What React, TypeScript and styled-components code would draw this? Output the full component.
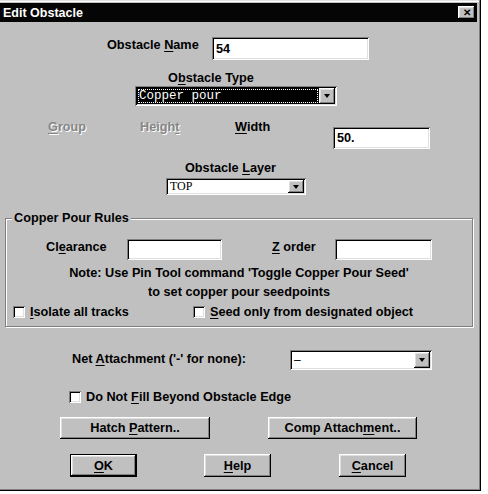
import React from 'react';
import styled, { createGlobalStyle } from 'styled-components';

const GlobalStyle = createGlobalStyle`
  html, body {
    margin: 0;
    padding: 0;
    background: #ffffff;
  }
`;

const EditObstacle: React.FC = () => {
  return (
    <Window>
      <TitleBar>
        <Title>Edit Obstacle</Title>
        <CloseButton>✕</CloseButton>
      </TitleBar>

      <Row $top={15} $left={107}>
        <Label $width={105}>
          Obstacle <Key>N</Key>ame
        </Label>
        <TextField $width={157} $height={23}>54</TextField>
      </Row>

      <Stack $top={10} $left={135}>
        <Label $indent={33}>
          O<Key>b</Key>stacle Type
        </Label>
        <Combo $width={202} $height={20}>
          <ComboValue $selected>Copper pour</ComboValue>
          <DropButton />
        </Combo>
      </Stack>

      <Row $top={13} $left={48}>
        <Label $width={92} $disabled>
          <Key>G</Key>roup
        </Label>
        <Label $width={95} $disabled>
          Heigh<Key>t</Key>
        </Label>
        <Label $width={98}>
          <Key>W</Key>idth
        </Label>
        <TextField $width={97} $height={22} $offset={8}>
          50.
        </TextField>
      </Row>

      <Stack $top={11} $left={166}>
        <Label $indent={19}>
          Obstacle <Key>L</Key>ayer
        </Label>
        <Combo $width={140} $height={17} $offset={2}>
          <ComboValue $serif>TOP</ComboValue>
          <DropButton />
        </Combo>
      </Stack>

      <GroupBox>
        <Legend>Copper Pour Rules</Legend>
        <Row $top={13} $left={40}>
          <Label $width={81}>
            Cl<Key>e</Key>arance
          </Label>
          <TextField $width={95} $height={21} />
          <Label $width={63} $indent={50}>
            <Key>Z</Key> order
          </Label>
          <TextField $width={97} $height={21} />
        </Row>
        <Note>
          Note: Use Pin Tool command 'Toggle Copper Pour Seed'
          <br />
          to set copper pour seedpoints
        </Note>
        <Row $top={2} $left={7}>
          <Check $width={180}>
            <CheckBox />
            <span>
              <Key>I</Key>solate all tracks
            </span>
          </Check>
          <Check>
            <CheckBox />
            <span>
              <Key>S</Key>eed only from designated object
            </span>
          </Check>
        </Row>
      </GroupBox>

      <Row $top={23} $left={72}>
        <Label $width={218} $offset={1}>
          Net <Key>A</Key>ttachment ('-' for none):
        </Label>
        <Combo $width={142} $height={20}>
          <ComboValue>–</ComboValue>
          <DropButton />
        </Combo>
      </Row>

      <Row $top={19} $left={69}>
        <Check>
          <CheckBox />
          <span>
            Do Not <Key>F</Key>ill Beyond Obstacle Edge
          </span>
        </Check>
      </Row>

      <Row $top={12} $left={60}>
        <Button $width={150}>
          <span>
            Hatch <Key>P</Key>attern..
          </span>
        </Button>
        <Button $width={149} $gap={58}>
          <span>
            Comp Attach<Key>m</Key>ent..
          </span>
        </Button>
      </Row>

      <Row $top={15} $left={70}>
        <Button $width={67} $height={23} $default>
          <span>
            <Key>O</Key>K
          </span>
        </Button>
        <Button $width={67} $height={23} $gap={67}>
          <span>
            <Key>H</Key>elp
          </span>
        </Button>
        <Button $width={67} $height={23} $gap={68}>
          <span>
            <Key>C</Key>ancel
          </span>
        </Button>
      </Row>
    </Window>
  );
};

export default function App() {
  return (
    <>
      <GlobalStyle />
      <EditObstacle />
    </>
  );
}

const raised = `
  box-shadow: inset -1px -1px #000000, inset 1px 1px #ffffff,
    inset -2px -2px #808080, inset 2px 2px #dfdfdf;
`;

const sunken = `
  box-shadow: inset 1px 1px #808080, inset -1px -1px #ffffff,
    inset 2px 2px #000000, inset -2px -2px #dfdfdf;
`;

const Window = styled.div`
  width: 481px;
  height: 491px;
  box-sizing: border-box;
  padding-top: 3px;
  display: flex;
  flex-direction: column;
  background: #c0c0c0;
  box-shadow: inset -1px -1px #000000, inset -2px -2px #808080,
    inset 0 1px #dfdfdf, inset 0 2px #ffffff;
  font-family: "Liberation Sans", Arial, sans-serif;
  font-size: 12.7px;
  font-weight: bold;
  color: #000000;
`;

const TitleBar = styled.div`
  width: 477px;
  height: 19px;
  display: flex;
  align-items: center;
  justify-content: space-between;
  background: #050505;
  padding: 0 2px 0 3px;
  box-sizing: border-box;
`;

const Title = styled.span`
  color: #ffffff;
  font-size: 12.5px;
  font-weight: bold;
`;

const CloseButton = styled.div`
  width: 17px;
  height: 13px;
  display: flex;
  align-items: center;
  justify-content: center;
  background: #c0c0c0;
  ${raised}
  font-size: 10px;
  font-weight: bold;
  line-height: 1;
  color: #000000;
`;

const Row = styled.div<{ $top: number; $left: number }>`
  display: flex;
  align-items: flex-start;
  margin-top: ${({ $top }) => $top}px;
  padding-left: ${({ $left }) => $left}px;
`;

const Stack = styled.div<{ $top: number; $left: number }>`
  display: flex;
  flex-direction: column;
  align-items: flex-start;
  margin-top: ${({ $top }) => $top}px;
  padding-left: ${({ $left }) => $left}px;
`;

const Label = styled.span<{
  $width?: number;
  $indent?: number;
  $offset?: number;
  $disabled?: boolean;
}>`
  display: block;
  flex: none;
  line-height: 16px;
  white-space: nowrap;
  width: ${({ $width }) => ($width ? `${$width}px` : 'auto')};
  margin-left: ${({ $indent }) => $indent ?? 0}px;
  margin-top: ${({ $offset }) => $offset ?? 0}px;
  color: ${({ $disabled }) => ($disabled ? '#868686' : '#000000')};
  text-shadow: ${({ $disabled }) => ($disabled ? '1px 1px 0 #ffffff' : 'none')};
`;

const Key = styled.span`
  text-decoration: underline;
  text-underline-offset: 2px;
`;

const TextField = styled.div<{ $width: number; $height: number; $offset?: number }>`
  flex: none;
  width: ${({ $width }) => $width}px;
  height: ${({ $height }) => $height}px;
  margin-top: ${({ $offset }) => $offset ?? 0}px;
  box-sizing: border-box;
  padding: 0 4px;
  display: flex;
  align-items: center;
  background: #ffffff;
  ${sunken}
`;

const Combo = styled.div<{ $width: number; $height: number; $offset?: number }>`
  flex: none;
  width: ${({ $width }) => $width}px;
  height: ${({ $height }) => $height}px;
  margin-top: ${({ $offset }) => $offset ?? 0}px;
  box-sizing: border-box;
  padding: 2px;
  display: flex;
  background: #ffffff;
  ${sunken}
`;

const ComboValue = styled.div<{ $selected?: boolean; $serif?: boolean }>`
  flex: 1;
  display: flex;
  align-items: center;
  padding-left: 2px;
  font-weight: normal;
  white-space: nowrap;
  font-family: ${({ $selected, $serif }) =>
    $selected
      ? '"Liberation Mono", monospace'
      : $serif
      ? '"Liberation Serif", serif'
      : '"Liberation Sans", Arial, sans-serif'};
  font-size: ${({ $selected }) => ($selected ? '12.5px' : '12px')};
  background: ${({ $selected }) => ($selected ? '#000000' : 'transparent')};
  color: ${({ $selected }) => ($selected ? '#ffffff' : '#000000')};
  outline: ${({ $selected }) => ($selected ? '1px dotted #ffffff' : 'none')};
  outline-offset: -2px;
`;

const DropButton = styled.div`
  flex: none;
  width: 16px;
  background: #c0c0c0;
  ${raised}
  position: relative;

  &::after {
    content: '';
    position: absolute;
    left: 5px;
    top: 50%;
    margin-top: -2px;
    border-left: 3.5px solid transparent;
    border-right: 3.5px solid transparent;
    border-top: 4px solid #000000;
  }
`;

const GroupBox = styled.fieldset`
  margin: 15px 0 0 5px;
  width: 468px;
  min-inline-size: 0;
  box-sizing: border-box;
  padding: 0 0 6px 0;
  border: 1px solid #808080;
  box-shadow: inset 1px 1px #ffffff, 1px 1px #ffffff;
`;

const Legend = styled.legend`
  margin-left: 6px;
  padding: 0 2px;
  line-height: 16px;
  background: #c0c0c0;
`;

const Note = styled.div`
  margin-top: 4px;
  line-height: 19px;
  text-align: center;
`;

const Check = styled.label<{ $width?: number }>`
  display: flex;
  align-items: center;
  line-height: 16px;
  white-space: nowrap;
  width: ${({ $width }) => ($width ? `${$width}px` : 'auto')};
`;

const CheckBox = styled.span`
  flex: none;
  width: 12px;
  height: 12px;
  margin-right: 5px;
  box-sizing: border-box;
  background: #ffffff;
  ${sunken}
`;

const Button = styled.div<{ $width: number; $height?: number; $gap?: number; $default?: boolean }>`
  flex: none;
  width: ${({ $width }) => $width}px;
  height: ${({ $height }) => $height ?? 22}px;
  margin-left: ${({ $gap }) => $gap ?? 0}px;
  box-sizing: border-box;
  display: flex;
  align-items: center;
  justify-content: center;
  background: #c0c0c0;
  ${raised}
  border: ${({ $default }) => ($default ? '1px solid #000000' : 'none')};
`;
